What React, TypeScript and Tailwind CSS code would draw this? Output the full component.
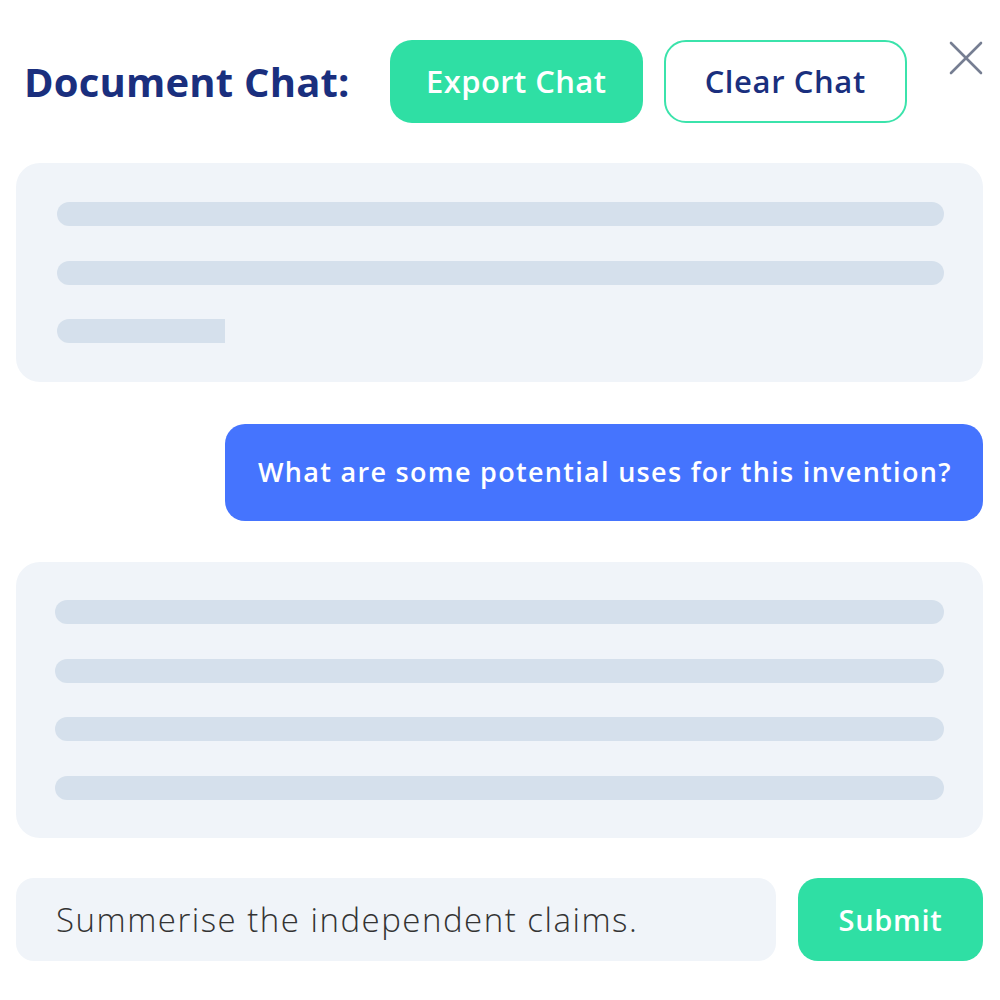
const SansFont = "font-['Open_Sans',sans-serif]"

const SkeletonBar = ({ short }: { short?: boolean }) => (
  <div
    className={
      short
        ? "h-6 w-[168px] rounded-l-full bg-[#d5e0ec]"
        : "h-6 w-full rounded-full bg-[#d5e0ec]"
    }
  />
)

const CloseIcon = () => (
  <svg
    width="34"
    height="34"
    viewBox="0 0 34 34"
    fill="none"
    stroke="#767e92"
    strokeWidth="2.6"
    strokeLinecap="round"
  >
    <line x1="2" y1="2" x2="32" y2="32" />
    <line x1="32" y1="2" x2="2" y2="32" />
  </svg>
)

export default function App() {
  return (
    <div className={`flex h-[1000px] w-[1000px] flex-col bg-white pl-4 pr-[17px] pt-10 ${SansFont}`}>
      <header className="flex h-[83px] items-center">
        <h1 className="ml-2 text-[40px] font-bold tracking-[0.2px] text-[#1a2f7e]">
          Document Chat:
        </h1>
        <button
          type="button"
          className="ml-[40px] flex h-[83px] w-[253px] items-center justify-center rounded-[22px] bg-[#2fdfa4] text-[31px] font-semibold tracking-[0.4px] text-white"
        >
          Export Chat
        </button>
        <button
          type="button"
          className="ml-[21px] flex h-[83px] w-[243px] items-center justify-center rounded-[22px] border-2 border-[#3be3ab] bg-white text-[31px] font-semibold tracking-[0.6px] text-[#1a2f7e]"
        >
          Clear Chat
        </button>
        <div className="ml-auto self-start pt-[1px]">
          <CloseIcon />
        </div>
      </header>

      <section className="mt-10 flex h-[219px] flex-col justify-between rounded-[24px] bg-[#f0f4f9] py-[39px] pl-[41px] pr-[39px]">
        <SkeletonBar />
        <SkeletonBar />
        <SkeletonBar short />
      </section>

      <div className="mt-[42px] flex h-[97px] w-[758px] items-center self-end rounded-[20px] bg-[#4574fe] pl-[33px] text-[27px] font-semibold tracking-[1.3px] text-white">
        What are some potential uses for this invention?
      </div>

      <section className="mt-[41px] flex h-[276px] flex-col justify-between rounded-[24px] bg-[#f0f4f9] py-[38px] pl-[39px] pr-[39px]">
        <SkeletonBar />
        <SkeletonBar />
        <SkeletonBar />
        <SkeletonBar />
      </section>

      <div className="mt-10 flex h-[83px] items-stretch gap-[22px]">
        <div className="flex w-[760px] items-center rounded-[18px] bg-[#f0f4f9] pl-10 text-[33px] font-light tracking-[1.5px] text-[#333333]">
          Summerise the independent claims.
        </div>
        <button
          type="button"
          className="flex flex-1 items-center justify-center rounded-[20px] bg-[#2fdfa4] text-[29px] font-semibold tracking-[0.7px] text-white"
        >
          Submit
        </button>
      </div>
    </div>
  )
}
